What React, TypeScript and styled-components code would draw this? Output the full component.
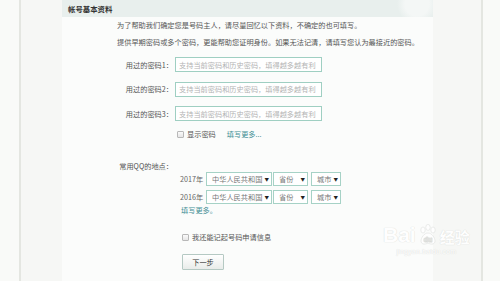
import { Fragment } from 'react';
import styled, { createGlobalStyle } from 'styled-components';

const GlobalStyle = createGlobalStyle`
  html, body {
    margin: 0;
    padding: 0;
    background: #f6f7f5;
  }
  body {
    font-family: "Noto Sans CJK SC", "Noto Sans", "Liberation Sans", sans-serif;
    color: #5a5a5a;
  }
`;

const Page = styled.div`
  position: relative;
  display: flex;
  width: 500px;
  height: 281px;
  overflow: hidden;
  background: #f6f7f5;
`;

const Rail = styled.div<{ $side: 'left' | 'right' }>`
  width: ${(p) => (p.$side === 'left' ? '19px' : '17px')};
  ${(p) => (p.$side === 'left' ? 'border-right' : 'border-left')}: 2px solid #e4e6e1;
  background: #f9faf8;
`;

const Gutter = styled.div<{ $w: number }>`
  width: ${(p) => p.$w}px;
`;

const Panel = styled.div`
  width: 371px;
  background: #fbfcfb;
  display: flex;
  flex-direction: column;
`;

const HeaderBand = styled.div`
  height: 17px;
  display: flex;
  align-items: center;
  padding-left: 6px;
  background: radial-gradient(circle at 355px 4px, #f4f7f6 0, #f4f7f6 12px, #e8efed 20px), #e8efed;
  font-size: 7.4px;
  font-weight: 700;
  color: #333;
`;

const Intro = styled.div`
  padding-left: 55px;
  font-size: 7.2px;
  line-height: 17px;
  color: #555;
`;

const Form = styled.div`
  display: grid;
  grid-template-columns: 111px 1fr;
  column-gap: 2px;
  align-items: center;
  margin-top: 6px;
`;

const Label = styled.div<{ $top?: number }>`
  text-align: right;
  font-size: 7.2px;
  color: #555;
  margin-top: ${(p) => p.$top ?? 0}px;
`;

const Field = styled.div<{ $top?: number }>`
  margin-top: ${(p) => p.$top ?? 0}px;
  display: flex;
  align-items: center;
`;

const TextInput = styled.input`
  box-sizing: border-box;
  width: 147px;
  height: 15px;
  padding: 0 0 0 3px;
  border: 1px solid #9fcfc2;
  background: #fff;
  font-family: inherit;
  font-size: 7.2px;
  outline: none;
  &::placeholder {
    color: #b3b3b3;
  }
`;

const Box = styled.span`
  display: inline-block;
  box-sizing: border-box;
  width: 7px;
  height: 7px;
  border: 1px solid #b8b8b8;
  background: linear-gradient(#fafafa, #e6e6e6);
  border-radius: 1px;
`;

const CheckRow = styled.div<{ $left: number }>`
  display: flex;
  align-items: center;
  height: 10px;
  padding-left: ${(p) => p.$left}px;
  font-size: 7.2px;
  color: #555;
  gap: 3px;
`;

const LinkText = styled.span<{ $gap?: number }>`
  color: #3f8e94;
  margin-left: ${(p) => p.$gap ?? 0}px;
`;

const Places = styled.div`
  grid-column: 2;
  padding-left: 5px;
  margin-top: 1px;
  display: flex;
  flex-direction: column;
  gap: 4px;
`;

const PlaceRow = styled.div`
  display: flex;
  align-items: center;
  height: 14px;
  font-size: 7.2px;
  color: #666;
`;

const Year = styled.span`
  width: 26px;
`;

const Select = styled.div<{ $w: number; $gap: number }>`
  box-sizing: border-box;
  width: ${(p) => p.$w}px;
  height: 14px;
  margin-right: ${(p) => p.$gap}px;
  border: 1px solid #a6d2c6;
  background: #fff;
  display: flex;
  align-items: center;
  justify-content: space-between;
  padding: 0 2px 0 5px;
  color: #777;
`;

const Arrow = styled.span`
  font-size: 4.5px;
  color: #222;
`;

const MoreLink = styled.div`
  padding-left: 6px;
  font-size: 7.2px;
  color: #3f8e94;
  height: 10px;
  line-height: 10px;
  margin-top: 1px;
`;

const NextButton = styled.button`
  box-sizing: border-box;
  width: 42px;
  height: 16px;
  margin-left: 120px;
  margin-top: 12px;
  padding: 0;
  border: 1px solid #b5c9c3;
  border-radius: 1px;
  background: linear-gradient(#ffffff, #e9ecea);
  font-family: inherit;
  font-size: 7.2px;
  color: #333;
`;

const Watermark = styled.div`
  position: absolute;
  left: 383px;
  top: 224px;
  display: flex;
  flex-direction: column;
  align-items: center;
  color: #ffffff;
  text-shadow: 0 0 1px #dadcd9, 0 0 1px #e0e2df;
  opacity: 0.9;
  pointer-events: none;
`;

const MarkTop = styled.div`
  display: flex;
  align-items: flex-end;
  gap: 2px;
  font-family: "Liberation Sans", sans-serif;
  font-weight: 700;
  font-size: 21px;
  line-height: 22px;
`;

const MarkCn = styled.span`
  font-family: "Noto Sans CJK SC", sans-serif;
  font-size: 15px;
  font-weight: 700;
  line-height: 19px;
`;

const MarkUrl = styled.div`
  font-family: "Liberation Sans", sans-serif;
  font-size: 7px;
  margin-top: 2px;
  letter-spacing: 0.2px;
`;

const Paw = () => (
  <svg width="20" height="22" viewBox="0 0 20 22">
    <g fill="#fff" stroke="#dcdedb" strokeWidth="0.6">
      <ellipse cx="5" cy="6" rx="2.2" ry="3" />
      <ellipse cx="10" cy="3.4" rx="2.2" ry="3" />
      <ellipse cx="15" cy="6" rx="2.2" ry="3" />
      <path d="M10 9 C6 9 3 14 3 17 C3 20 6 21 10 19 C14 21 17 20 17 17 C17 14 14 9 10 9 Z" />
      <text x="10" y="18" fontSize="7" textAnchor="middle" fill="#fff" stroke="#d6d8d5" strokeWidth="0.4" fontFamily="Liberation Sans, sans-serif">du</text>
    </g>
  </svg>
);

const places = ['2017年', '2016年'];

const App = () => (
  <Page>
    <GlobalStyle />
    <Rail $side="left" />
    <Gutter $w={41} />
    <Panel>
      <HeaderBand>帐号基本资料</HeaderBand>
      <Intro>
        为了帮助我们确定您是号码主人，请尽量回忆以下资料，不确定的也可填写。
        <br />
        提供早期密码或多个密码，更能帮助您证明身份。如果无法记清，请填写您认为最接近的密码。
      </Intro>
      <Form>
        {[1, 2, 3].map((n) => (
          <Fragment key={n}>
            <Label $top={n === 1 ? 0 : 9.5}>用过的密码{n}：</Label>
            <Field $top={n === 1 ? 0 : 9.5}>
              <TextInput placeholder="支持当前密码和历史密码，填得越多越有利" />
            </Field>
          </Fragment>
        ))}
        <div />
        <Field $top={8}>
          <CheckRow $left={2}>
            <Box />
            <span>显示密码</span>
            <LinkText $gap={8}>填写更多...</LinkText>
          </CheckRow>
        </Field>
        <Label $top={22}>常用QQ的地点：</Label>
        <div />
        <Places>
          {places.map((year) => (
            <PlaceRow key={year}>
              <Year>{year}</Year>
              <Select $w={66} $gap={1}>中华人民共和国<Arrow>▼</Arrow></Select>
              <Select $w={35} $gap={3}>省份<Arrow>▼</Arrow></Select>
              <Select $w={30} $gap={0}>城市<Arrow>▼</Arrow></Select>
            </PlaceRow>
          ))}
        </Places>
        <div />
        <MoreLink>填写更多。</MoreLink>
        <div />
        <Field $top={17}>
          <CheckRow $left={7}>
            <Box />
            <span>我还能记起号码申请信息</span>
          </CheckRow>
        </Field>
      </Form>
      <NextButton>下一步</NextButton>
    </Panel>
    <Gutter $w={48} />
    <Rail $side="right" />
    <Watermark>
      <MarkTop>
        Bai<Paw />
        <MarkCn>经验</MarkCn>
      </MarkTop>
      <MarkUrl>jingyan.baidu.com</MarkUrl>
    </Watermark>
  </Page>
);

export default App;
